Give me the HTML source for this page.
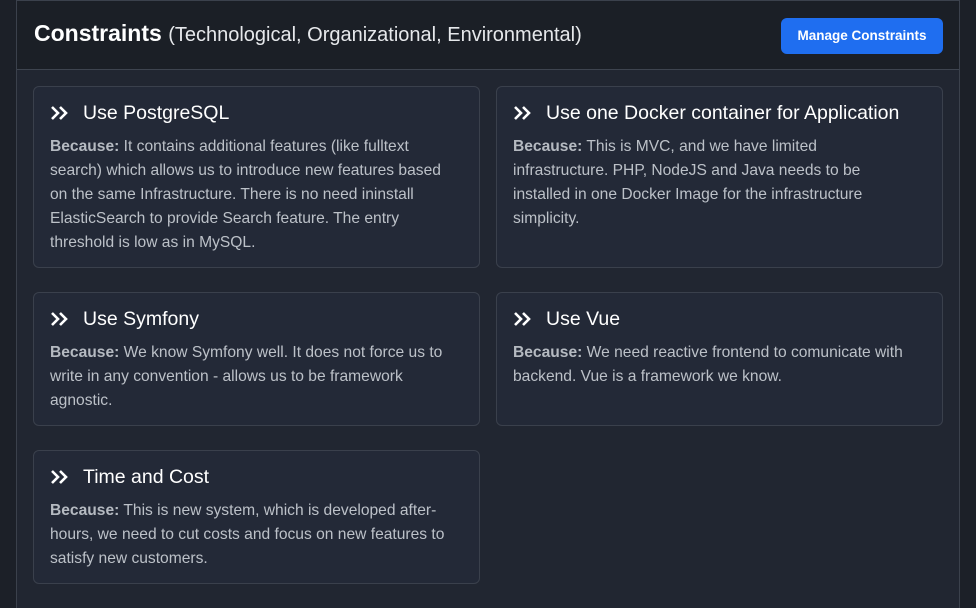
<!DOCTYPE html>
<html style="width:976px;height:608px;overflow:hidden"><head><meta charset="utf-8"><style>
*{margin:0;padding:0;box-sizing:border-box}
body{width:976px;height:608px;background:#1c2028;font-family:"Liberation Sans",sans-serif;overflow:hidden;position:relative}
.panel{position:absolute;left:16px;top:0;width:944px;height:608px;background:#212631;border:1px solid #3b414c;border-bottom:none}
.hdr{position:absolute;left:0;top:0;width:942px;height:69px;background:#1b1f26;border-bottom:1px solid #3e444f}
.hdr h1{position:absolute;left:17px;top:19px;font-size:23px;color:#fff;font-weight:bold;white-space:nowrap}
.hdr h1 span{font-weight:normal;font-size:20px;color:#e6e8eb}
.btn{position:absolute;left:764px;top:17px;width:162px;height:36px;background:#1f6ef0;border-radius:6px;color:#fff;font-size:13.5px;font-weight:bold;text-align:center;line-height:36px}
.card{position:absolute;width:447px;background:#232937;border:1px solid #3a404c;border-radius:6px}
.card h2{position:absolute;left:16px;top:15px;font-size:19.5px;font-weight:normal;color:#fff;white-space:nowrap}
.card h2 svg{vertical-align:-2px;margin-right:15px}
.card p{position:absolute;left:16px;top:48px;font-size:15.6px;line-height:24px;color:#bcc1c8;white-space:nowrap}
.card p b{color:#b5bac1}
</style></head><body>
<div class="panel">
<div class="hdr"><h1>Constraints <span>(Technological, Organizational, Environmental)</span></h1><div class="btn">Manage Constraints</div></div>
</div>
<div class="card" style="left:33px;top:86px;height:182px"><h2><svg width="18" height="16" viewBox="0 0 18 16"><path d="M2 2l6 6-6 6M10 2l6 6-6 6" stroke="#fff" stroke-width="2.6" fill="none"/></svg>Use PostgreSQL</h2><p><b>Because:</b> It contains additional features (like fulltext<br>search) which allows us to introduce new features based<br>on the same Infrastructure. There is no need ininstall<br>ElasticSearch to provide Search feature. The entry<br>threshold is low as in MySQL.</p></div>
<div class="card" style="left:496px;top:86px;height:182px"><h2><svg width="18" height="16" viewBox="0 0 18 16"><path d="M2 2l6 6-6 6M10 2l6 6-6 6" stroke="#fff" stroke-width="2.6" fill="none"/></svg>Use one Docker container for Application</h2><p><b>Because:</b> This is MVC, and we have limited<br>infrastructure. PHP, NodeJS and Java needs to be<br>installed in one Docker Image for the infrastructure<br>simplicity.</p></div>
<div class="card" style="left:33px;top:292px;height:134px"><h2><svg width="18" height="16" viewBox="0 0 18 16"><path d="M2 2l6 6-6 6M10 2l6 6-6 6" stroke="#fff" stroke-width="2.6" fill="none"/></svg>Use Symfony</h2><p><b>Because:</b> We know Symfony well. It does not force us to<br>write in any convention - allows us to be framework<br>agnostic.</p></div>
<div class="card" style="left:496px;top:292px;height:134px"><h2><svg width="18" height="16" viewBox="0 0 18 16"><path d="M2 2l6 6-6 6M10 2l6 6-6 6" stroke="#fff" stroke-width="2.6" fill="none"/></svg>Use Vue</h2><p><b>Because:</b> We need reactive frontend to comunicate with<br>backend. Vue is a framework we know.</p></div>
<div class="card" style="left:33px;top:450px;height:134px"><h2><svg width="18" height="16" viewBox="0 0 18 16"><path d="M2 2l6 6-6 6M10 2l6 6-6 6" stroke="#fff" stroke-width="2.6" fill="none"/></svg>Time and Cost</h2><p><b>Because:</b> This is new system, which is developed after-<br>hours, we need to cut costs and focus on new features to<br>satisfy new customers.</p></div>
</body></html>
